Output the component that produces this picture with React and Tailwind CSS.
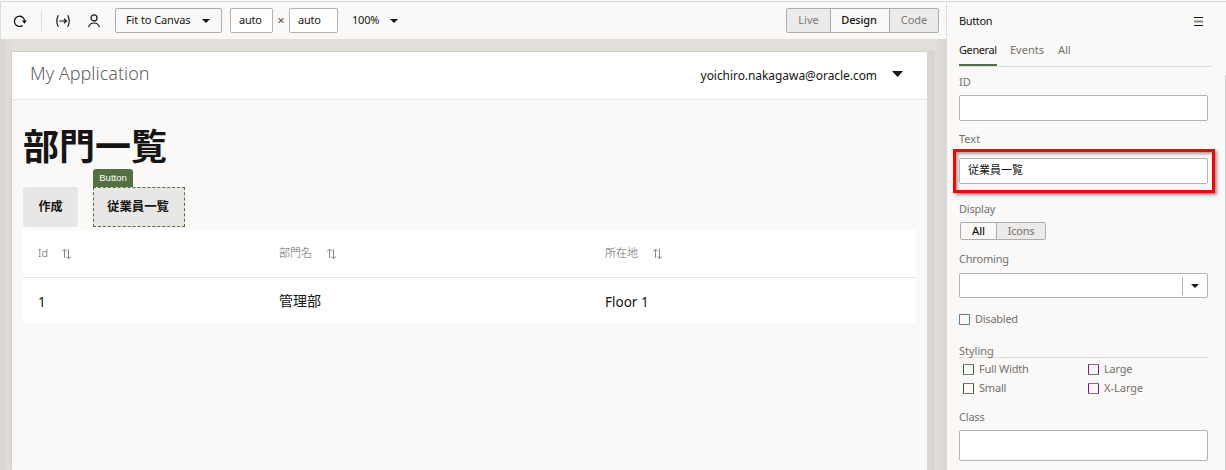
import React from "react";

function Caret({ className = "" }) {
  return (
    <svg viewBox="0 0 8 4" preserveAspectRatio="none" className={`shrink-0 ${className}`} fill="#161513">
      <path d="M0 0h8L4 4z" />
    </svg>
  );
}

function Sort() {
  return (
    <svg width="11" height="12" viewBox="0 0 11 12" fill="none" stroke="#8b8987" strokeWidth="1" className="shrink-0">
      <path d="M3.5 10V1.5M1 3.5L3.5 1 6 3.5M7.5 1v9.5M5.5 8.5L7.5 10.7l2.5-2.2" />
    </svg>
  );
}

function Toolbar() {
  return (
    <div className="flex h-[37px] items-center bg-[#faf9f8] pr-[7px] text-[11px] text-[#161513]">
      <svg width="14" height="14" viewBox="0 0 14 14" fill="none" stroke="#161513" strokeWidth="1.3" className="ml-[12px]">
        <path d="M9.6 11.4A5.1 5.1 0 1 1 11.6 7.3" />
        <path d="M8.9 6.6h5L11.4 9.8z" fill="#161513" stroke="none" />
      </svg>
      <div className="ml-[14px] h-[20px] w-px bg-[#dedcda]" />
      <svg width="14" height="12" viewBox="0 0 14 12" fill="none" stroke="#161513" strokeWidth="1.2" className="ml-[14px]">
        <path d="M2.4 0.3Q-0.8 6 2.4 11.7M11.6 0.3Q14.8 6 11.6 11.7M3.2 6h7.2M8 3.8L10.4 6 8 8.2" />
      </svg>
      <svg width="14" height="14" viewBox="0 0 14 14" fill="none" stroke="#161513" strokeWidth="1.2" className="ml-[17px]">
        <circle cx="7" cy="3.9" r="3" />
        <path d="M1.6 13.2C2.2 10.4 4 9 7 9s4.8 1.4 5.4 4.2" />
      </svg>
      <div className="ml-[14px] flex h-[25px] w-[107px] items-center justify-between rounded-[2px] border border-[#aeacaa] pr-[11px] pl-[10px] whitespace-nowrap">
        <span className="tracking-[-0.1px]">Fit to Canvas</span>
        <Caret className="h-[4px] w-[8px]" />
      </div>
      <div className="ml-[8px] flex h-[25px] w-[43px] items-center rounded-[2px] border border-[#b5b3b1] bg-white pl-[8px] tracking-[-0.2px]">auto</div>
      <span className="w-[16px] text-center text-[13px] text-[#5a5040]">×</span>
      <div className="flex h-[25px] w-[49px] items-center rounded-[2px] border border-[#b5b3b1] bg-white pl-[8px] tracking-[-0.2px]">auto</div>
      <span className="ml-[14px] w-[38px] tracking-[-0.2px]">100%</span>
      <Caret className="h-[4px] w-[8px]" />
      <div className="ml-auto flex h-[25px] w-[153px] overflow-hidden rounded-[2px] border border-[#aeacaa] text-[#7b7976]">
        <div className="flex w-[43px] items-center justify-center bg-[#ecebea]">Live</div>
        <div className="flex w-[60px] items-center justify-center border-x border-[#aeacaa] pr-[2px] font-medium tracking-[-0.15px] text-[#161513]">Design</div>
        <div className="flex flex-1 items-center justify-center bg-[#ecebea]">Code</div>
      </div>
    </div>
  );
}

const columns = "grid grid-cols-[241px_326px_1fr] items-center pl-[15px]";

function Canvas() {
  return (
    <div className="flex flex-1 bg-[#e2dfda]">
      <div className="w-[11px] bg-gradient-to-r from-[#dad7d3] to-[#e2dfda]" />
      <div className="mt-[13px] flex w-[915px] flex-col bg-[#faf9f8] shadow-[0_0_2px_rgba(0,0,0,0.2)]">
        <header className="flex h-[48px] items-center border-b border-[#e4e3e2] bg-white pr-[24px] pl-[18px]">
          <span className="mb-[5px] text-[18px] font-light text-[#65625f]">My Application</span>
          <span className="ml-auto text-[12px] tracking-[-0.06px] text-[#161513]">yoichiro.nakagawa@oracle.com</span>
          <Caret className="mb-[3px] ml-[15px] h-[6px] w-[11px]" />
        </header>
        <main className="flex flex-col px-[11px]">
          <h1 className="mt-[22px] h-[47px] text-[36px] leading-[50px] font-bold text-[#161513]">部門一覧</h1>
          <div className="flex h-[58px] items-end text-[12px] font-bold text-[#161513]">
            <div className="flex h-[40px] w-[55px] items-center justify-center rounded-[3px] bg-[#e8e7e6]">作成</div>
            <div className="ml-[15px] flex flex-col items-start">
              <div className="flex h-[18px] w-[40px] items-center justify-center rounded-t-[3px] bg-[#537140] pt-px font-['Liberation_Sans'] text-[9.5px] font-normal text-white">Button</div>
              <div className="flex h-[40px] w-[92px] items-center justify-center border border-dashed border-[#537140] bg-[#e8e7e6] pr-[2px] text-[12.4px]">従業員一覧</div>
            </div>
          </div>
          <div className="mt-[3px] bg-white">
            <div className={`${columns} h-[48px] border-b border-[#e6e5e4] text-[11px] font-light text-[#65625f]`}>
              <div className="flex items-center gap-[14px]"><span className="w-[9px]">Id</span> <Sort /></div>
              <div className="flex items-center gap-[14px]"><span className="-mt-px">部門名</span> <Sort /></div>
              <div className="flex items-center gap-[14px]"><span className="-mt-px">所在地</span> <Sort /></div>
            </div>
            <div className={`${columns} h-[45px] text-[14px] text-[#161513]`}>
              <div className="pt-[4px] text-[13.5px]">1</div>
              <div>管理部</div>
              <div className="pt-[4px] text-[13.5px]">Floor 1</div>
            </div>
          </div>
        </main>
      </div>
      <div className="mt-[12px] w-[8px] rounded-tr-[3px] bg-[#d6d5d1]" />
      <div className="flex-1 bg-gradient-to-r from-[#e2dfda] to-[#d9d6d2]" />
    </div>
  );
}

function Label({ children, className = "" }) {
  return <div className={`flex h-[16px] items-center ${className}`}>{children}</div>;
}

function Check({ children, className = "", box = "border-[#777]" }) {
  return (
    <div className={`flex items-center ${className}`}>
      <span className={`mr-[5px] size-[11px] shrink-0 rounded-[1px] border ${box}`} />
      {children}
    </div>
  );
}

function Inspector() {
  return (
    <aside className="flex w-[280px] border-l border-[#dedcda] bg-[#faf9f8] text-[11px] text-[#74716e]">
      <div className="ml-[12px] flex w-[252px] flex-col">
        <div className="mt-[9px] flex h-[20px] items-center justify-between pr-[8px] tracking-[-0.35px] text-[#161513]">
          Button
          <svg width="9" height="9" viewBox="0 0 9 9">
            <path d="M0 .5h9M0 8.5h9" stroke="#161513" />
            <path d="M0 4.5h9" stroke="#8b8885" strokeWidth="2" />
          </svg>
        </div>
        <div className="mt-[6px] flex h-[30px] items-stretch border-b border-[#dedcda]">
          <div className="w-[38px] border-b-2 border-[#537140] pt-[5px] tracking-[-0.4px] text-[#161513]">General</div>
          <div className="ml-[13px] pt-[5px]">Events</div>
          <div className="ml-[14px] pt-[5px]">All</div>
        </div>
        <div className="flex w-[249px] flex-col">
          <Label className="mt-[7px]">ID</Label>
          <div className="mt-[5px] h-[26px] rounded-[2px] border border-[#b5b3b1] bg-white" />
          <Label className="mt-[10px]">Text</Label>
          <div className="-mx-[6px] mt-[2px] h-[44px] w-[262px] border-[3px] border-[#ff0000] px-[3px] pt-[6px] shadow-[2px_2px_3px_rgba(0,0,0,0.4),inset_2px_2px_3px_rgba(0,0,0,0.35)]">
            <div className="flex h-[26px] w-[249px] items-center rounded-[2px] border border-[#b5b3b1] bg-white pb-[2px] pl-[8px] text-[#161513]">従業員一覧</div>
          </div>
          <Label className="mt-[8px] tracking-[-0.2px]">Display</Label>
          <div className="mt-[5px] ml-px flex h-[18px] w-[86px] overflow-hidden rounded-[2px] border border-[#aeacaa]">
            <div className="flex w-[36px] items-center justify-center border-r border-[#aeacaa] font-medium text-[#161513]">All</div>
            <div className="flex flex-1 items-center justify-center bg-[#ecebea] tracking-[-0.2px]">Icons</div>
          </div>
          <Label className="mt-[11px] tracking-[-0.2px]">Chroming</Label>
          <div className="mt-[6px] flex h-[25px] items-center justify-end rounded-[2px] border border-[#b5b3b1] bg-white pr-[8px]">
            <div className="mr-[8px] h-[18px] w-px bg-[#b5b3b1]" />
            <Caret className="h-[4px] w-[8px]" />
          </div>
          <Check className="mt-[12px] h-[18px] tracking-[-0.25px]" box="border-x-[#5087a5] border-y-[#777]">Disabled</Check>
          <div className="mt-[14px] h-[16px] border-b border-[#dedcda] leading-[17px]">Styling</div>
          <div className="mt-[2px] grid grid-cols-[125px_1fr] pl-[4px]">
            <Check className="h-[19px] tracking-[-0.2px]" box="border-x-[#286428] border-y-[#777]">Full Width</Check>
            <Check className="h-[19px] tracking-[-0.2px]" box="border-x-[#861486] border-y-[#777]">Large</Check>
            <Check className="h-[19px] tracking-[-0.2px]" box="border-x-[#286428] border-y-[#777]">Small</Check>
            <Check className="h-[19px]" box="border-x-[#861486] border-y-[#777]">X-Large</Check>
          </div>
          <Label className="mt-[11px] tracking-[-0.2px]">Class</Label>
          <div className="mt-[5px] h-[31px] rounded-[2px] border border-[#b5b3b1] bg-white" />
        </div>
      </div>
      <div className="mt-[73px] ml-auto w-px bg-[#d0cecc]" />
    </aside>
  );
}

export default function App() {
  return (
    <div className="flex h-[470px] w-[1226px] flex-col overflow-hidden bg-[#faf9f8] pt-px font-['Noto_Sans','Noto_Sans_CJK_JP',sans-serif]">
      <div className="flex flex-1 border-t border-l border-[#dedcda]">
        <div className="flex w-[945px] flex-col">
          <Toolbar />
          <Canvas />
        </div>
        <Inspector />
      </div>
    </div>
  );
}
